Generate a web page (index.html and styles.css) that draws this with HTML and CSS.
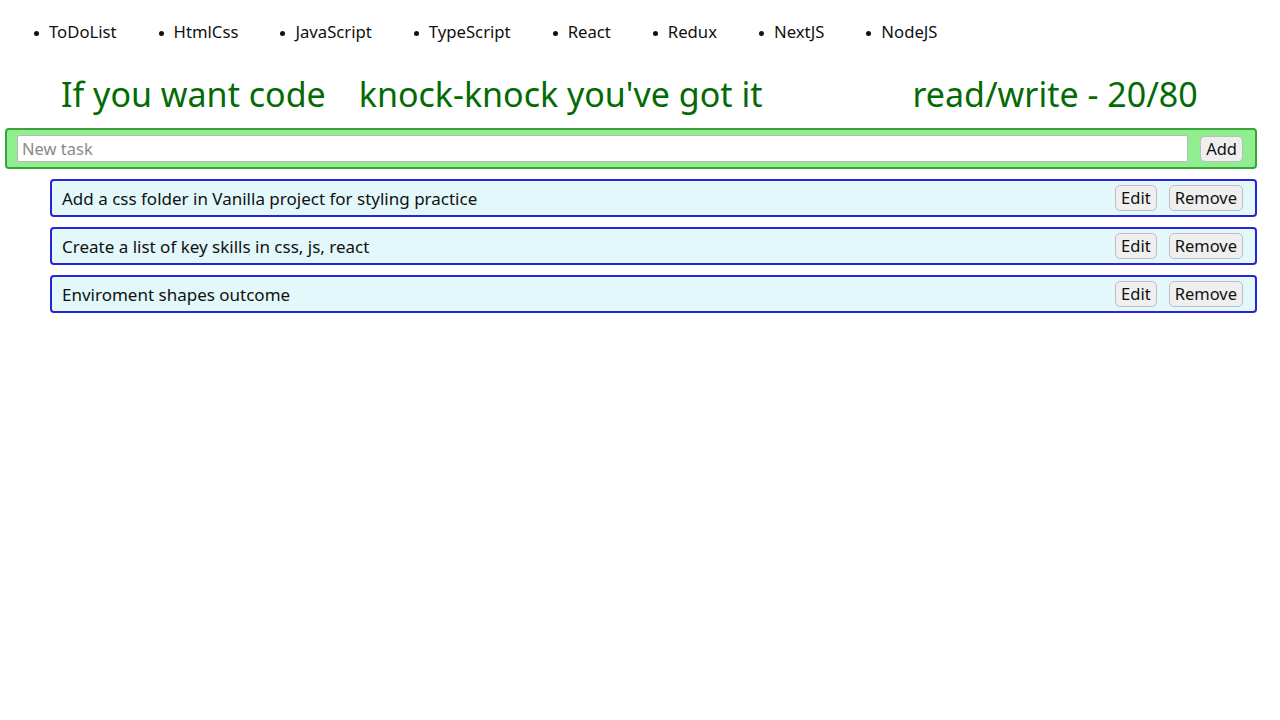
FILE: index.html
```html
<!DOCTYPE html>
<html lang="en">
<head>
<meta charset="utf-8">
<title>ToDoList</title>
<link rel="stylesheet" href="styles.css">
</head>
<body>
<nav class="nav">
  <ul class="nav-list">
    <li class="nav-item">ToDoList</li>
    <li class="nav-item">HtmlCss</li>
    <li class="nav-item">JavaScript</li>
    <li class="nav-item">TypeScript</li>
    <li class="nav-item">React</li>
    <li class="nav-item">Redux</li>
    <li class="nav-item">NextJS</li>
    <li class="nav-item">NodeJS</li>
  </ul>
</nav>
<h1 class="title">
  <span class="title-a">If you want code</span>
  <span class="title-b">knock-knock you've got it</span>
  <span class="title-c">read/write - 20/80</span>
</h1>
<form class="add-form">
  <input class="add-input" type="text" placeholder="New task">
  <button class="btn" type="button">Add</button>
</form>
<ul class="tasks">
  <li class="task"><span class="task-text">Add a css folder in Vanilla project for styling practice</span><button class="btn" type="button">Edit</button><button class="btn" type="button">Remove</button></li>
  <li class="task"><span class="task-text">Create a list of key skills in css, js, react</span><button class="btn" type="button">Edit</button><button class="btn" type="button">Remove</button></li>
  <li class="task"><span class="task-text">Enviroment shapes outcome</span><button class="btn" type="button">Edit</button><button class="btn" type="button">Remove</button></li>
</ul>
</body>
</html>
```
FILE: styles.css
```css
* { box-sizing: border-box; }
body {
  margin: 0;
  background: #fff;
  font-family: "Noto Sans", "Open Sans", sans-serif;
  color: #111;
}
.nav-list {
  display: flex;
  gap: 42px;
  margin: 0;
  padding: 20px 0 0 34px;
  list-style: none;
  font-size: 16.7px;
  line-height: 24px;
}
.nav-item::before {
  content: "";
  display: inline-block;
  width: 5px;
  height: 5px;
  border-radius: 50%;
  background: #111;
  margin-right: 10px;
  vertical-align: middle;
}
.title {
  display: flex;
  margin: 0;
  padding: 27px 0 11px 61px;
  font-size: 34px;
  font-weight: 400;
  line-height: 46px;
  color: #046b04;
}
.title-b { margin-left: 33px; }
.title-c { margin-left: 150px; }
.add-form {
  display: flex;
  align-items: center;
  gap: 12px;
  margin: 0 23px 0 5px;
  height: 41px;
  padding: 0 12px 0 10px;
  background: #90ee90;
  border: 2px solid #3aa43a;
  border-radius: 4px;
}
.add-input {
  flex: 1;
  height: 27px;
  border: 1px solid #b8b8b8;
  border-radius: 2px;
  padding: 0 4px;
  font: inherit;
  font-size: 16.5px;
}
.add-input::placeholder { color: #8a8a8a; }
.btn {
  height: 26px;
  padding: 0 5px;
  font: inherit;
  font-size: 16.5px;
  line-height: 24px;
  color: #111;
  background: #efefef;
  border: 1px solid #bdbdbd;
  border-radius: 5px;
}
.tasks {
  list-style: none;
  margin: 10px 23px 0 50px;
  padding: 0;
  display: flex;
  flex-direction: column;
  gap: 10px;
}
.task {
  display: flex;
  align-items: center;
  gap: 12px;
  height: 38px;
  padding: 0 12px 0 10px;
  background: #e2f8fa;
  border: 2px solid #2424d8;
  border-radius: 4px;
  font-size: 17px;
}
.task-text { flex: 1; }
```
